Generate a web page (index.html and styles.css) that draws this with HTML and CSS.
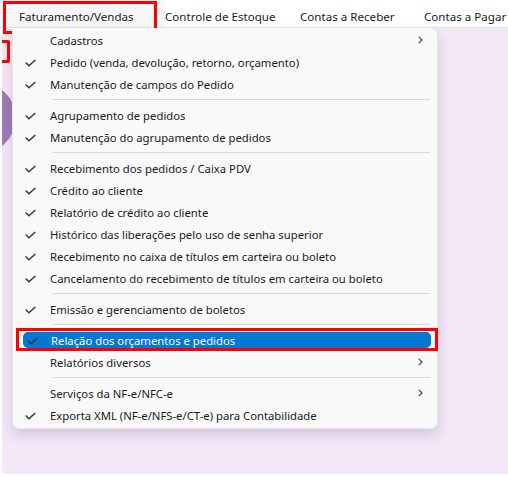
FILE: index.html
```html
<!DOCTYPE html>
<html lang="pt-BR">
<head>
    <meta charset="UTF-8">
    <title>Faturamento/Vendas</title>
    <link rel="stylesheet" href="styles.css">
</head>
<body>

<div class="menubar">
    <div class="menubar-item active">Faturamento/Vendas</div>
    <div class="menubar-item">Controle de Estoque</div>
    <div class="menubar-item">Contas a Receber</div>
    <div class="menubar-item">Contas a Pagar</div>
</div>

<div class="workspace">
    <div class="logo-circle"></div>
    <div class="side-mark"></div>
</div>

<!-- red outline around the top menu item -->
<div class="mark mark-top"></div>

<!-- dropdown menu -->
<div class="dropdown">
    <div class="row sub"><span class="check"></span><span class="label">Cadastros</span><span class="arrow"></span></div>
    <div class="row checked"><span class="check"></span><span class="label">Pedido (venda, devolução, retorno, orçamento)</span></div>
    <div class="row checked"><span class="check"></span><span class="label">Manutenção de campos do Pedido</span></div>
    <div class="sep"></div>
    <div class="row checked"><span class="check"></span><span class="label">Agrupamento de pedidos</span></div>
    <div class="row checked"><span class="check"></span><span class="label">Manutenção do agrupamento de pedidos</span></div>
    <div class="sep"></div>
    <div class="row checked"><span class="check"></span><span class="label">Recebimento dos pedidos / Caixa PDV</span></div>
    <div class="row checked"><span class="check"></span><span class="label">Crédito ao cliente</span></div>
    <div class="row checked"><span class="check"></span><span class="label">Relatório de crédito ao cliente</span></div>
    <div class="row checked"><span class="check"></span><span class="label">Histórico das liberações pelo uso de senha superior</span></div>
    <div class="row checked"><span class="check"></span><span class="label">Recebimento no caixa de títulos em carteira ou boleto</span></div>
    <div class="row checked"><span class="check"></span><span class="label">Cancelamento do recebimento de títulos em carteira ou boleto</span></div>
    <div class="sep"></div>
    <div class="row checked"><span class="check"></span><span class="label">Emissão e gerenciamento de boletos</span></div>
    <div class="sep"></div>
    <div class="row-wrap marked">
        <div class="row checked selected"><span class="check"></span><span class="label">Relação dos orçamentos e pedidos</span></div>
    </div>
    <div class="row sub"><span class="check"></span><span class="label">Relatórios diversos</span><span class="arrow"></span></div>
    <div class="sep"></div>
    <div class="row sub"><span class="check"></span><span class="label">Serviços da NF-e/NFC-e</span><span class="arrow"></span></div>
    <div class="row checked"><span class="check"></span><span class="label">Exporta XML (NF-e/NFS-e/CT-e) para Contabilidade</span></div>
</div>

</body>
</html>
```

FILE: styles.css
```css
body {
    font-family: "Noto Sans", "Open Sans", sans-serif;
    font-size: 11.3px;
    color: #1a1a1a;
    background-color: #fff;
    margin: 0;
    padding: 0;
    width: 508px;
    height: 477px;
    overflow: hidden;
    position: relative;
}

/* top menu bar */
.menubar {
    display: flex;
    height: 28px;
    font-size: 11.6px;
    background-color: #fff;
    border-bottom: 1px solid #e3e3e3;
    box-sizing: border-box;
}
.menubar-item {
    padding: 9px 0 0 0;
    white-space: nowrap;
}
.menubar-item.active {
    width: 146px;
    padding-left: 19px;
    background-color: #f7f7f7;
}
.menubar-item:nth-child(2) { width: 135px; }
.menubar-item:nth-child(3) { width: 124px; }

/* purple area behind the menu */
.workspace {
    margin-left: 2px;
    height: 446px;
    background-color: #f4e8f8;
    position: relative;
    overflow: hidden;
}
.logo-circle {
    position: absolute;
    left: -62px;
    top: 54px;
    width: 76px;
    height: 72px;
    border-radius: 50%;
    background-color: #9e7cb8;
}
.side-mark {
    position: absolute;
    left: -10px;
    top: 12px;
    width: 12px;
    height: 17px;
    border: 3px solid #f00;
    border-radius: 2px;
}

.mark {
    position: absolute;
    border: 3px solid #f00;
    box-sizing: border-box;
}
.mark-top {
    left: 3px;
    top: 1px;
    width: 154px;
    height: 33px;
}

/* dropdown */
.dropdown {
    position: absolute;
    left: 12px;
    top: 28px;
    width: 426px;
    height: 401px;
    box-sizing: border-box;
    padding: 1px 0 0 0;
    background-color: #f9f9f9;
    border: 1px solid #e6e6e6;
    border-top: none;
    border-radius: 0 7px 7px 7px;
    box-shadow: 0 6px 14px rgba(60, 30, 80, 0.18);
}
.row {
    display: flex;
    align-items: center;
    height: 22px;
    margin: 0 7px 0 9px;
    border-radius: 4px;
    white-space: nowrap;
}
.check {
    width: 28px;
    height: 22px;
    flex: none;
}
.checked .check {
    background: url("data:image/svg+xml;utf8,<svg xmlns='http://www.w3.org/2000/svg' width='11' height='8' viewBox='0 0 11 8'><path d='M0.7 3.6 L3.9 6.7 L10.3 0.9' fill='none' stroke='%23333' stroke-width='1.4'/></svg>") no-repeat 3px 8px;
}
.label {
    flex: 1;
}
.arrow {
    width: 12px;
    height: 22px;
    background: url("data:image/svg+xml;utf8,<svg xmlns='http://www.w3.org/2000/svg' width='5' height='8' viewBox='0 0 5 8'><path d='M0.8 0.8 L4 4 L0.8 7.2' fill='none' stroke='%23444' stroke-width='1.2'/></svg>") no-repeat 0 7px;
}
.sep {
    height: 1px;
    margin: 4px 7px 4px 40px;
    background-color: #d9d9d9;
}

.row-wrap.marked {
    margin: -1px 0 0 3px;
    width: 422px;
    border: 3px solid #f00;
    box-sizing: border-box;
    padding: 1px 0 0 0;
}
.row.selected {
    margin: 0 4px 0 4px;
    height: 16px;
    background-color: #0078d4;
    color: #fff;
    border-radius: 5px;
}
.row.selected .check {
    height: 16px;
    background-position: 4px 5px;
}
```
